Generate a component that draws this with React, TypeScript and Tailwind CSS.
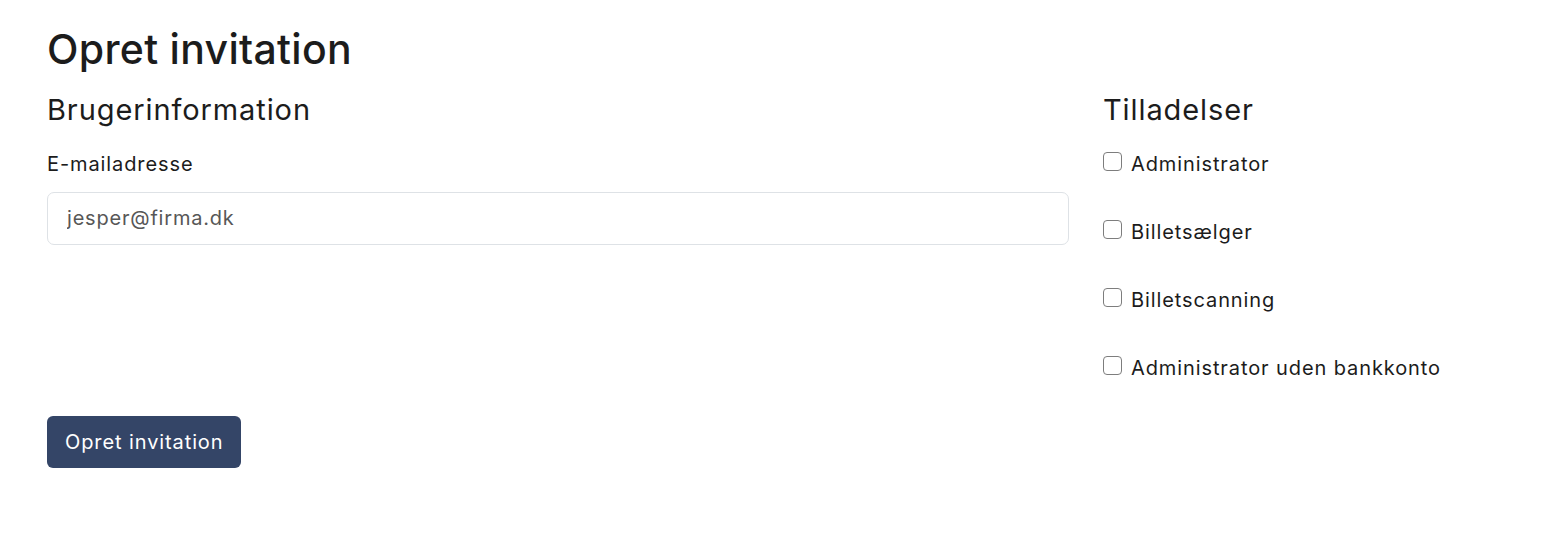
import { FC } from 'react';

const permissions = ['Administrator', 'Billetsælger', 'Billetscanning', 'Administrator uden bankkonto'];

const App: FC = () => {
  return (
    <div className="min-h-[542px] bg-white px-[47px] pt-[25px] text-[#1c1c1c] font-['Inter',sans-serif]">
      <h1 className="text-[41px] font-medium leading-[1.2] tracking-[0.3px] mb-[19px]">Opret invitation</h1>
      <div className="grid grid-cols-[1022px_1fr] gap-x-[34px]">
        <div>
          <h3 className="text-[29px] font-normal leading-[1.2] tracking-[0.9px] mb-[21px]">Brugerinformation</h3>
          <label className="block text-[20px] leading-[1.5] tracking-[0.9px] mb-[13px]">E-mailadresse</label>
          <input
            type="email"
            placeholder="jesper@firma.dk"
            className="block w-full h-[53px] rounded-[7px] border border-[#dee2e6] px-[19px] text-[20px] tracking-[0.8px] text-[#1c1c1c] placeholder:text-[#575757] outline-none"
          />
        </div>
        <div>
          <h3 className="text-[29px] font-normal leading-[1.2] tracking-[0.9px] mb-[21px]">Tilladelser</h3>
          <div className="flex flex-col gap-[38px]">
            {permissions.map((p) => (
              <label key={p} className="flex items-center gap-[9px] text-[20px] leading-[1.5] tracking-[0.9px]">
                <input type="checkbox" className="appearance-none w-[19px] h-[19px] rounded-[4px] border border-[#7d7d7d] bg-white -mt-[5px]" />
                {p}
              </label>
            ))}
          </div>
        </div>
      </div>
      <button className="mt-[33px] h-[52px] px-[18px] rounded-[6px] bg-[#344567] text-white text-[20px] tracking-[0.9px]">Opret invitation</button>
    </div>
  );
};

export default App;
